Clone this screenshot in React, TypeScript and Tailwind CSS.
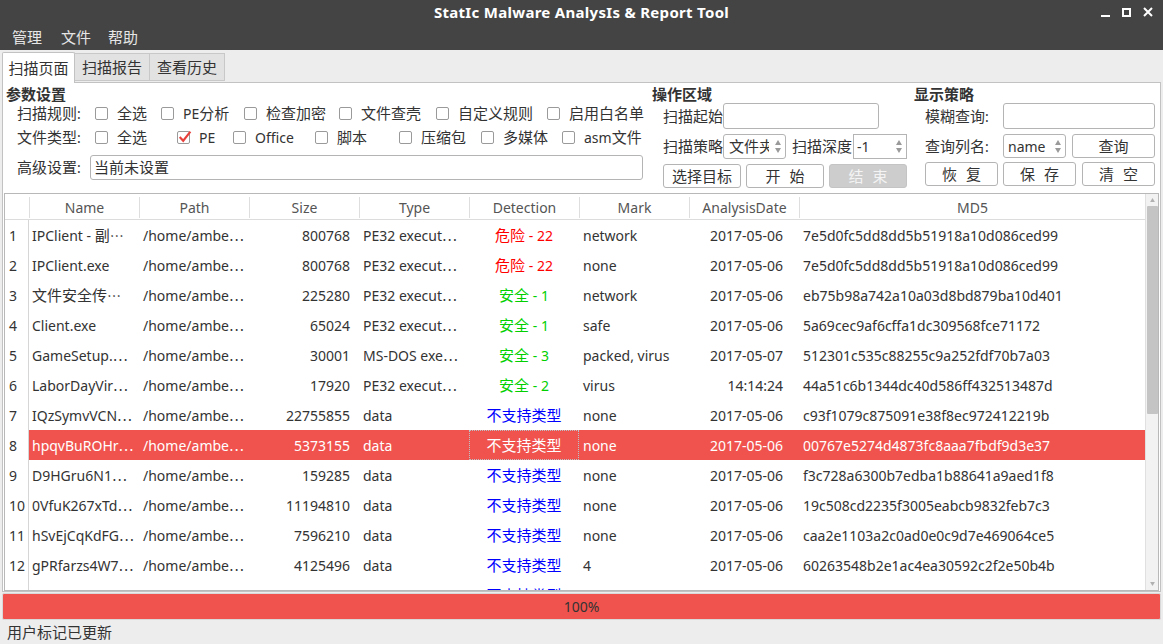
import React from 'react';

const font = { fontFamily: '"Noto Sans", "Noto Sans CJK SC", sans-serif' };

// CJK runs render a touch larger than the latin text in the original
function T({ s }: { s: string }) {
    const parts = s.split(/([\u3000-\u9fff\uff00-\uffef]+)/);
    return (
        <span className="whitespace-pre">
            {parts.map((p, i) =>
                i % 2 === 1 ? (
                    <span key={i} className="text-[15px]">{p}</span>
                ) : (
                    <React.Fragment key={i}>{p}</React.Fragment>
                )
            )}
        </span>
    );
}

type Row = {
    name: string;
    cut: boolean;
    size: string;
    type: string;
    det: string;
    detKind: 'red' | 'green' | 'blue';
    mark: string;
    date: string;
    md5: string;
};

const rows: Row[] = [
    { name: 'IPClient - 副', cut: true, size: '800768', type: 'PE32 execut', det: '危险 - 22', detKind: 'red', mark: 'network', date: '2017-05-06', md5: '7e5d0fc5dd8dd5b51918a10d086ced99' },
    { name: 'IPClient.exe', cut: false, size: '800768', type: 'PE32 execut', det: '危险 - 22', detKind: 'red', mark: 'none', date: '2017-05-06', md5: '7e5d0fc5dd8dd5b51918a10d086ced99' },
    { name: '文件安全传', cut: true, size: '225280', type: 'PE32 execut', det: '安全 - 1', detKind: 'green', mark: 'network', date: '2017-05-06', md5: 'eb75b98a742a10a03d8bd879ba10d401' },
    { name: 'Client.exe', cut: false, size: '65024', type: 'PE32 execut', det: '安全 - 1', detKind: 'green', mark: 'safe', date: '2017-05-06', md5: '5a69cec9af6cffa1dc309568fce71172' },
    { name: 'GameSetup.', cut: true, size: '30001', type: 'MS-DOS exe', det: '安全 - 3', detKind: 'green', mark: 'packed, virus', date: '2017-05-07', md5: '512301c535c88255c9a252fdf70b7a03' },
    { name: 'LaborDayVir', cut: true, size: '17920', type: 'PE32 execut', det: '安全 - 2', detKind: 'green', mark: 'virus', date: '14:14:24', md5: '44a51c6b1344dc40d586ff432513487d' },
    { name: 'IQzSymvVCN', cut: true, size: '22755855', type: 'data', det: '不支持类型', detKind: 'blue', mark: 'none', date: '2017-05-06', md5: 'c93f1079c875091e38f8ec972412219b' },
    { name: 'hpqvBuROHr', cut: true, size: '5373155', type: 'data', det: '不支持类型', detKind: 'blue', mark: 'none', date: '2017-05-06', md5: '00767e5274d4873fc8aaa7fbdf9d3e37' },
    { name: 'D9HGru6N1', cut: true, size: '159285', type: 'data', det: '不支持类型', detKind: 'blue', mark: 'none', date: '2017-05-06', md5: 'f3c728a6300b7edba1b88641a9aed1f8' },
    { name: '0VfuK267xTd', cut: true, size: '11194810', type: 'data', det: '不支持类型', detKind: 'blue', mark: 'none', date: '2017-05-06', md5: '19c508cd2235f3005eabcb9832feb7c3' },
    { name: 'hSvEjCqKdFG', cut: true, size: '7596210', type: 'data', det: '不支持类型', detKind: 'blue', mark: 'none', date: '2017-05-06', md5: 'caa2e1103a2c0ad0e0c9d7e469064ce5' },
    { name: 'gPRfarzs4W7', cut: true, size: '4125496', type: 'data', det: '不支持类型', detKind: 'blue', mark: '4', date: '2017-05-06', md5: '60263548b2e1ac4ea30592c2f2e50b4b' },
    { name: 'kfJw8dPq2Lx', cut: true, size: '2291044', type: 'data', det: '不支持类型', detKind: 'blue', mark: 'none', date: '2017-05-06', md5: 'b1d4e7f0a92c3385d6e1f0a7c4b29e61' },
];

const detColor = { red: 'text-[#ff0000]', green: 'text-[#00d000]', blue: 'text-[#0000ff]' };

const cols = 'grid grid-cols-[24px_110px_110px_110px_110px_110px_110px_110px_346px]';

function Ell() {
    return <span style={{ fontFamily: '"Noto Sans CJK SC", sans-serif' }}>…</span>;
}

function Box({ checked }: { checked?: boolean }) {
    return (
        <span className="relative inline-block w-[13px] h-[13px] border border-[#9a9a9a] rounded-[2px] bg-white shrink-0">
            {checked && (
                <svg viewBox="0 0 14 14" className="absolute -left-[1px] -top-[3px] w-[15px] h-[15px]">
                    <path d="M2.5 7.5 L5.8 11 L12.5 2.5" fill="none" stroke="#e8413c" strokeWidth="2" />
                </svg>
            )}
        </span>
    );
}

function Check({ label, w, checked }: { label: string; w: number; checked?: boolean }) {
    return (
        <div className="flex items-center gap-[9px]" style={{ width: w }}>
            <Box checked={checked} />
            <T s={label} />
        </div>
    );
}

function Btn({ label, w, disabled }: { label: string; w: number; disabled?: boolean }) {
    const chars = label.split(' ');
    return (
        <div
            className={`h-[24px] flex items-center justify-center gap-[9px] rounded-[3px] border text-[15px] ${disabled ? 'bg-[#cdcdcd] border-[#c4c4c4] text-[#f4f4f4]' : 'bg-white border-[#b4b4b4] text-[#333]'}`}
            style={{ width: w }}
        >
            {chars.map((c) => (
                <span key={c}>{c}</span>
            ))}
        </div>
    );
}

function Arrows() {
    return (
        <div className="flex flex-col items-center gap-[3px] text-[#9a9a9a]">
            <svg width="6" height="5" viewBox="0 0 6 5"><path d="M3 0 L6 5 L0 5 Z" fill="currentColor" /></svg>
            <svg width="6" height="5" viewBox="0 0 6 5"><path d="M0 0 L6 0 L3 5 Z" fill="currentColor" /></svg>
        </div>
    );
}

export default function App() {
    return (
        <div className="w-[1163px] h-[644px] flex flex-col bg-[#ededed] text-[14px] text-[#333] overflow-hidden" style={font}>
            {/* title bar */}
            <div className="h-[24px] bg-[#444444] relative flex items-center justify-center">
                <span className="text-white font-bold text-[15px] tracking-[0.3px]">StatIc Malware AnalysIs &amp; Report Tool</span>
                <div className="absolute right-[10px] top-0 h-[24px] flex items-center gap-[12px] text-white">
                    <svg width="9" height="9" viewBox="0 0 9 9"><rect x="0" y="7" width="9" height="2" fill="currentColor" /></svg>
                    <svg width="9" height="9" viewBox="0 0 9 9"><rect x="1" y="1" width="7" height="7" fill="none" stroke="currentColor" strokeWidth="2" /></svg>
                    <svg width="10" height="10" viewBox="0 0 10 10"><path d="M1 1 L9 9 M9 1 L1 9" stroke="currentColor" strokeWidth="2" /></svg>
                </div>
            </div>
            {/* menu */}
            <div className="h-[26px] bg-[#444444] flex items-center pl-[12px] text-[15px] text-[#e6e6e6]">
                <span className="w-[49px]">管理</span>
                <span className="w-[47px]">文件</span>
                <span>帮助</span>
            </div>
            {/* tabs */}
            <div className="h-[32px] flex items-end pl-[2px] bg-[#ededed] text-[15px]">
                <div className="w-[73px] h-[31px] bg-white border border-b-0 border-[#c2c2c2] rounded-t-[2px] flex items-center justify-center text-[#333] relative top-[1px]">扫描页面</div>
                <div className="w-[75px] h-[28px] bg-[#e2e2e2] border border-l-0 border-[#c8c8c8] flex items-center justify-center mb-[1px]">扫描报告</div>
                <div className="w-[75px] h-[28px] bg-[#e2e2e2] border border-l-0 border-[#c8c8c8] flex items-center justify-center mb-[1px]">查看历史</div>
            </div>
            {/* pane */}
            <div className="mx-[2px] h-[510px] bg-white border border-[#c2c2c2] flex flex-col">
                <div className="h-[110px] flex">
                    {/* params */}
                    <div className="w-[646px] pl-[3px] pt-[2px]">
                        <div className="font-bold h-[16px] leading-[18px] text-[15px]">参数设置</div>
                        <div className="flex items-center h-[24px] pl-[11px]">
                            <span className="w-[78px]"><T s="扫描规则" />:</span>
                            <Check label="全选" w={66} />
                            <Check label="PE分析" w={83} />
                            <Check label="检查加密" w={95} />
                            <Check label="文件查壳" w={97} />
                            <Check label="自定义规则" w={111} />
                            <Check label="启用白名单" w={100} />
                        </div>
                        <div className="flex items-center h-[24px] pl-[11px]">
                            <span className="w-[78px]"><T s="文件类型" />:</span>
                            <Check label="全选" w={82} />
                            <Check label="PE" w={56} checked />
                            <Check label="Office" w={82} />
                            <Check label="脚本" w={84} />
                            <Check label="压缩包" w={82} />
                            <Check label="多媒体" w={81} />
                            <Check label="asm文件" w={85} />
                        </div>
                        <div className="flex items-center h-[25px] pl-[11px] mt-[6px]">
                            <span className="w-[73px]"><T s="高级设置" />:</span>
                            <div className="w-[553px] h-[25px] border border-[#b4b4b4] rounded-[3px] flex items-center pl-[3px] text-[15px]">当前未设置</div>
                        </div>
                    </div>
                    {/* operation */}
                    <div className="w-[262px] pl-[3px] pt-[2px]">
                        <div className="font-bold h-[18px] leading-[18px] text-[15px]">操作区域</div>
                        <div className="flex items-center pl-[11px] h-[26px]">
                            <span className="w-[60px] text-[15px]">扫描起始</span>
                            <div className="w-[156px] h-[26px] border border-[#b4b4b4] rounded-[3px]" />
                        </div>
                        <div className="flex items-center pl-[11px] h-[25px] mt-[5px]">
                            <span className="w-[60px] text-[15px]">扫描策略</span>
                            <div className="w-[63px] h-[25px] border border-[#b4b4b4] rounded-[3px] flex items-center justify-between pl-[5px] pr-[4px] overflow-hidden">
                                <span className="whitespace-nowrap overflow-hidden w-[40px] text-[15px]">文件夹</span>
                                <Arrows />
                            </div>
                            <span className="ml-[6px] w-[61px] text-[15px]">扫描深度</span>
                            <div className="w-[54px] h-[25px] border border-[#b4b4b4] flex items-center justify-between pl-[3px] pr-[4px]">
                                <span>-1</span>
                                <Arrows />
                            </div>
                        </div>
                        <div className="flex items-center gap-[5px] pl-[11px] mt-[5px]">
                            <Btn label="选择目标" w={78} />
                            <Btn label="开 始" w={78} />
                            <Btn label="结 束" w={78} disabled />
                        </div>
                    </div>
                    {/* display */}
                    <div className="flex-1 pl-[3px] pt-[2px]">
                        <div className="font-bold h-[18px] leading-[18px] text-[15px]">显示策略</div>
                        <div className="flex items-center pl-[11px] h-[26px]">
                            <span className="w-[78px]"><T s="模糊查询" />:</span>
                            <div className="w-[152px] h-[26px] border border-[#b4b4b4] rounded-[3px]" />
                        </div>
                        <div className="flex items-center pl-[11px] h-[24px] mt-[5px]">
                            <span className="w-[78px]"><T s="查询列名" />:</span>
                            <div className="w-[63px] h-[24px] border border-[#b4b4b4] rounded-[3px] flex items-center justify-between pl-[4px] pr-[4px]">
                                <span>name</span>
                                <Arrows />
                            </div>
                            <div className="ml-[6px]">
                                <Btn label="查询" w={83} />
                            </div>
                        </div>
                        <div className="flex items-center gap-[5px] pl-[11px] mt-[4px]">
                            <Btn label="恢 复" w={73} />
                            <Btn label="保 存" w={73} />
                            <div className="ml-[1px]"><Btn label="清 空" w={73} /></div>
                        </div>
                    </div>
                </div>
                {/* table */}
                <div className="mx-[1px] h-[398px] border border-[#b8b8b8] flex overflow-hidden">
                    <div className="w-[1140px] flex flex-col">
                        <div className={`${cols} h-[26px] border-b border-[#dcdcdc] text-[#555]`}>
                            <div />
                            {['Name', 'Path', 'Size', 'Type', 'Detection', 'Mark', 'AnalysisDate', 'MD5'].map((h) => (
                                <div key={h} className="flex items-center justify-center border-l border-[#dedede] my-[3px]">{h}</div>
                            ))}
                        </div>
                        <div className="flex-1 overflow-hidden">
                            {rows.map((r, i) => {
                                const sel = i === 7;
                                const bg = sel ? 'bg-[#f0524d] text-white' : '';
                                return (
                                    <div key={i} className={`${cols} h-[30px]`}>
                                        <div className="flex items-center pl-[4px] border-r border-[#d6d6d6] bg-white text-[#333]">{i + 1}</div>
                                        <div className={`flex items-center pl-[3px] whitespace-nowrap overflow-hidden ${bg}`}>
                                            <span className="whitespace-pre"><T s={r.name} />{r.cut ? <Ell /> : null}</span>
                                        </div>
                                        <div className={`flex items-center pl-[4px] whitespace-nowrap ${bg}`}>
                                            <span>/home/ambe<Ell /></span>
                                        </div>
                                        <div className={`flex items-center justify-end pr-[9px] ${bg}`}>{r.size}</div>
                                        <div className={`flex items-center pl-[4px] whitespace-nowrap overflow-hidden ${bg}`}>
                                            <span>{r.type}{r.type !== 'data' ? <Ell /> : null}</span>
                                        </div>
                                        <div className={`flex items-center justify-center whitespace-nowrap ${sel ? 'bg-[#f0524d] text-white border border-dotted border-[#b9c3c8]' : detColor[r.detKind]}`}>
                                            <T s={r.det} />
                                        </div>
                                        <div className={`flex items-center pl-[4px] ${bg}`}>{r.mark}</div>
                                        <div className={`flex items-center justify-end pr-[16px] ${bg}`}>{r.date}</div>
                                        <div className={`flex items-center pl-[4px] ${bg}`}>{r.md5}</div>
                                    </div>
                                );
                            })}
                        </div>
                    </div>
                    {/* scrollbar */}
                    <div className="w-[13px] bg-[#f2f2f2] border-l border-[#e0e0e0] flex flex-col items-center">
                        <div className="h-[12px] flex items-center text-[#b0b0b0]">
                            <svg width="5" height="4" viewBox="0 0 6 5"><path d="M3 0 L6 5 L0 5 Z" fill="currentColor" /></svg>
                        </div>
                        <div className="w-[11px] h-[208px] bg-[#c4c4c4] rounded-[1px]" />
                        <div className="flex-1" />
                        <div className="h-[12px] flex items-center text-[#b0b0b0]">
                            <svg width="5" height="4" viewBox="0 0 6 5"><path d="M0 0 L6 0 L3 5 Z" fill="currentColor" /></svg>
                        </div>
                    </div>
                </div>
            </div>
            {/* progress */}
            <div className="mx-[2px] mt-[1px] h-[27px] bg-[#f0524d] border border-[#d9d9d9] rounded-[2px] flex items-center justify-center text-[#333]">100%</div>
            {/* status */}
            <div className="flex-1 flex items-center pl-[7px] text-[15px] text-[#333]">用户标记已更新</div>
        </div>
    );
}
